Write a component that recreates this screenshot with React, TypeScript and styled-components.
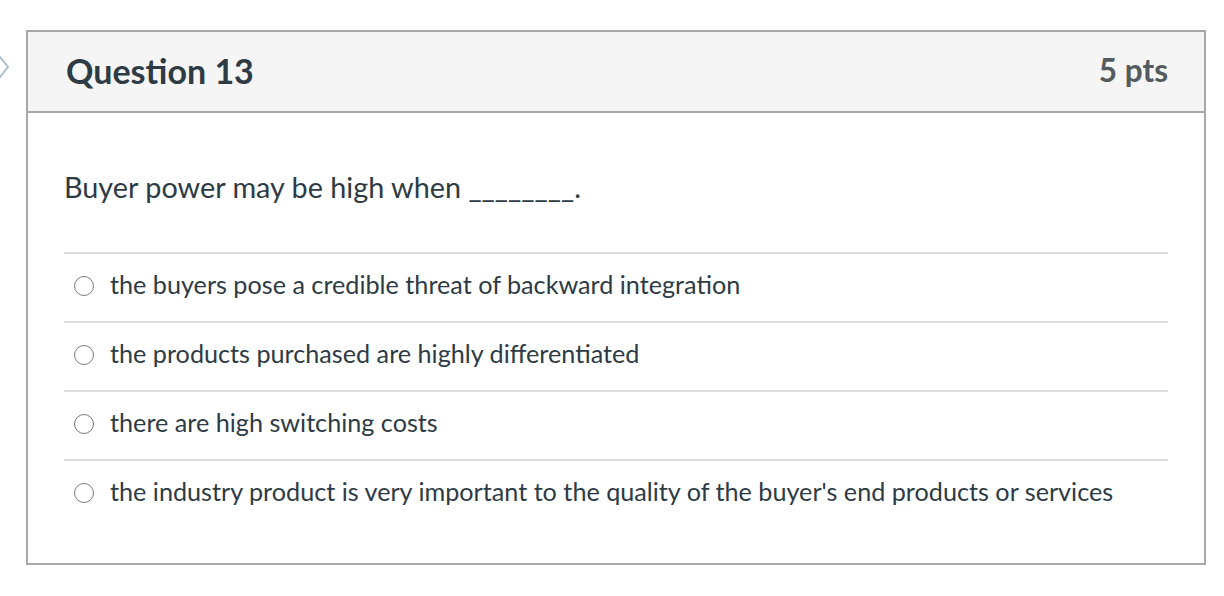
import React from 'react';
import styled, { createGlobalStyle } from 'styled-components';

const GlobalStyle = createGlobalStyle`
  html, body {
    margin: 0;
    padding: 0;
    background: #ffffff;
  }
  body {
    font-family: Lato, "Open Sans", sans-serif;
    color: #2d3b45;
  }
`;

const Page = styled.div`
  display: flex;
  align-items: flex-start;
  padding-top: 30px;
  width: 1224px;
`;

const NavColumn = styled.div`
  width: 26px;
  flex: none;
  padding-top: 21px;
  display: flex;
`;

const Chevron = styled.svg`
  width: 14px;
  height: 32px;
  margin-left: -4px;
`;

const Card = styled.div`
  width: 1180px;
  box-sizing: border-box;
  border: 2px solid #a8a8a8;
  background: #fff;
`;

const Header = styled.div`
  height: 81px;
  box-sizing: border-box;
  background: #f5f5f5;
  border-bottom: 2px solid #a8a8a8;
  display: flex;
  align-items: center;
  justify-content: space-between;
  padding: 0 36px 2px 38px;
`;

const Title = styled.h2`
  margin: 0;
  font-size: 34px;
  font-weight: 700;
  color: #2d3b45;
  line-height: 1;
`;

const Points = styled.div`
  font-size: 31.5px;
  font-weight: 700;
  color: #555a5e;
  line-height: 1;
`;

const Body = styled.div`
  padding: 55px 36px 35px 36px;
`;

const Prompt = styled.div`
  font-size: 28.8px;
  line-height: 38px;
  margin-bottom: 46px;
  color: #2d3b45;
`;

const Answers = styled.div`
  display: flex;
  flex-direction: column;
`;

const AnswerRow = styled.label`
  display: flex;
  align-items: center;
  gap: 16px;
  border-top: 2px solid #dddddd;
  padding: 15px 0 22px 10px;
  font-size: 25.2px;
  line-height: 30px;
  color: #2d3b45;
`;

const Radio = styled.span`
  width: 20px;
  height: 20px;
  flex: none;
  box-sizing: border-box;
  border-radius: 50%;
  border: 1.5px solid #7a7a7a;
  background: #fff;
  margin-top: 3px;
`;

const answers = [
  'the buyers pose a credible threat of backward integration',
  'the products purchased are highly differentiated',
  'there are high switching costs',
  "the industry product is very important to the quality of the buyer's end products or services",
];

const App = () => {
  return (
    <>
      <GlobalStyle />
      <Page>
        <NavColumn>
          <Chevron viewBox="0 0 14 32">
            <polyline
              points="0,1 12,16 0,31"
              fill="none"
              stroke="#a9bccd"
              strokeWidth="2"
              strokeLinejoin="round"
            />
          </Chevron>
        </NavColumn>
        <Card>
          <Header>
            <Title>Question 13</Title>
            <Points>5 pts</Points>
          </Header>
          <Body>
            <Prompt>Buyer power may be high when ________.</Prompt>
            <Answers>
              {answers.map((text) => (
                <AnswerRow key={text}>
                  <Radio />
                  {text}
                </AnswerRow>
              ))}
            </Answers>
          </Body>
        </Card>
      </Page>
    </>
  );
};

export default App;
